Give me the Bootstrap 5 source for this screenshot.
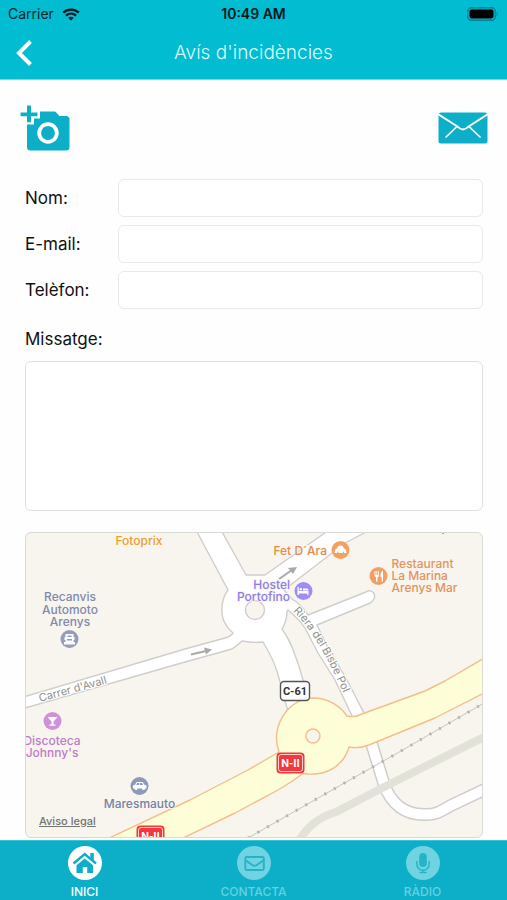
<!DOCTYPE html>
<html lang="ca">
<head>
<meta charset="utf-8">
<meta name="viewport" content="width=device-width, initial-scale=1">
<title>Avís d'incidències</title>
<link href="https://cdn.jsdelivr.net/npm/bootstrap@5.3.0/dist/css/bootstrap.min.css" rel="stylesheet">
<style>
  body { font-family: Inter, Roboto, "Liberation Sans", sans-serif; color: #111; background: #fefefe; }
  svg { display: block; }
  .top-area { background: #02bcd1; border-bottom: 1px solid #6fdbe6; height: 80px; }
  .status-line { height: 28px; padding: 0 8px; font-size: 14px; line-height: 28px; color: #04262b; }
  .status-time { font-weight: 600; color: #02181b; }
  .side { flex: 1 1 0; }
  .title-line { padding: 0 8px; height: 49px; }
  .title-line h1 { font-size: 19px; line-height: 28px; font-weight: 300; color: #dcfbff; }
  .plain-btn { display: block; background: none; border: 0; padding: 0; }
  .tools { padding: 25px 19px 0 20px; height: 99px; }
  .mail-btn { margin-top: 7px; }
  .report { padding: 0 24px 0 25px; }
  .report label { font-size: 17px; line-height: 24px; }
  .field-label { width: 93px; }
  .fields { gap: 8px; }
  .field { height: 38px; border: 1px solid #e9e9e9; border-radius: 6px; background: #fff; }
  .msg-label { margin: 18px 0 10px; }
  .msg { height: 150px; border: 1px solid #dedede; border-radius: 6px; resize: none; background: #fff; }
  .map-box { margin-top: 21px; border: 1px solid #d9d9d6; border-radius: 6px; background: #f8f5ee; }
  .map-box text { font-size: 12px; font-weight: 500; stroke: #f8f5ee; stroke-width: 2px; paint-order: stroke; }
  .map-box .street { fill: #8f8f8c; font-size: 11px; font-weight: 400; stroke: #fff; }
  .map-box .shield { stroke: none; font-family: Roboto, sans-serif; font-size: 11px; font-weight: 700; }
  .legal { left: 13px; bottom: 8px; font-size: 11px; line-height: 16px; font-weight: 500; color: #74736e; }
  .tabs { background: #0dafc8; height: 60px; border-top: 1px solid #3bc3d6; margin-top: 2px; }
  .tab { padding-top: 5px; gap: 4px; font-size: 12px; line-height: 16px; font-weight: 500; color: #66d1e0; }
  .tab.current { color: #fff; }
</style>
<script src="https://cdn.jsdelivr.net/npm/bootstrap@5.3.0/dist/js/bootstrap.bundle.min.js"></script>
</head>
<body class="d-flex flex-column min-vh-100">

<header class="top-area">
  <div class="status-line d-flex align-items-center">
    <div class="side d-flex align-items-center gap-2">
      <span>Carrier</span>
      <svg width="18" height="13" viewBox="0 0 18 13" fill="none" stroke="#02181b" stroke-width="2.4" aria-hidden="true">
        <path d="M1.2 4.7C5.6.6 12.4.6 16.8 4.7M4 7.6c2.9-2.6 7.1-2.6 10 0"/>
        <path d="M9 12.6 6.2 9.8c1.6-1.4 4-1.4 5.6 0z" fill="#02181b" stroke="none"/>
      </svg>
    </div>
    <div class="status-time">10:49 AM</div>
    <div class="side d-flex justify-content-end">
      <svg width="32" height="14" viewBox="0 0 32 14" aria-hidden="true">
        <rect x=".75" y=".75" width="27.5" height="12.5" rx="3.5" fill="none" stroke="#078290" stroke-width="1.3"/>
        <rect x="2.5" y="2.5" width="24" height="9" rx="2" fill="#000"/>
        <path d="M29.6 4.8c1.6.6 1.6 3.8 0 4.4z" fill="#078290"/>
      </svg>
    </div>
  </div>
  <div class="title-line d-flex align-items-center">
    <div class="side">
      <button type="button" class="plain-btn" aria-label="Enrere">
        <svg width="30" height="30" viewBox="0 0 30 30" fill="none" stroke="#fff" stroke-width="4"><path d="M22.500 3.500 11 15 22.500 26.500"/></svg>
      </button>
    </div>
    <h1 class="m-0">Avís d'incidències</h1>
    <div class="side"></div>
  </div>
</header>

<main class="flex-grow-1">
  <div class="tools d-flex justify-content-between align-items-start">
    <button type="button" class="plain-btn" aria-label="Afegir foto">
      <svg width="50" height="46" viewBox="0 0 50 46">
        <path d="M20 6.5h14.5q1 0 1.8 1l3 3.4H46q3.5 0 3.5 3.5V42q0 3.5-3.5 3.5H10.500q-3.500 0-3.500-3.500V19.500h7V13.500h6z" fill="#0dafc8"/>
        <path d="M7 .5h4v7h6.500v3.800H11v6H7v-6H.5V7.500H7z" fill="#0dafc8"/>
        <circle cx="28" cy="28" r="8.800" fill="none" stroke="#fff" stroke-width="3.800"/>
      </svg>
    </button>
    <button type="button" class="plain-btn mail-btn" aria-label="Enviar">
      <svg width="50" height="32" viewBox="0 0 50 32">
        <rect x=".5" y=".5" width="49" height="31" rx="2.500" fill="#0dafc8"/>
        <g fill="none" stroke="#fff"><path d="M0 2 19 14.200Q22 17.500 25 17.500T31 14.200L50 2" stroke-width="1.900"/><path d="M19.500 14 7.500 25.500M30.500 14 42.500 25.500" stroke-width="1.700"/></g>
      </svg>
    </button>
  </div>

  <form class="report">
    <div class="fields d-flex flex-column">
      <div class="d-flex align-items-center"><label class="field-label flex-shrink-0" for="nom">Nom:</label><input class="field form-control" id="nom" type="text"></div>
      <div class="d-flex align-items-center"><label class="field-label flex-shrink-0" for="email">E-mail:</label><input class="field form-control" id="email" type="email"></div>
      <div class="d-flex align-items-center"><label class="field-label flex-shrink-0" for="tel">Telèfon:</label><input class="field form-control" id="tel" type="tel"></div>
    </div>
    <label class="msg-label d-block" for="msg">Missatge:</label>
    <textarea class="msg form-control" id="msg"></textarea>

    <div class="map-box position-relative overflow-hidden">
      <svg class="w-100 h-auto" viewBox="26 533 456 304" role="img" aria-label="Mapa">
        <!-- lower street -->
        <g fill="none" stroke-linecap="round">
          <path d="M357 712 372 745 384 784C391 804 405 815 425 814.500 436 814.500 440 812 450 806L490 787" stroke="#cfcecb" stroke-width="13"/>
          <path d="M357 712 372 745 384 784C391 804 405 815 425 814.500 436 814.500 440 812 450 806L490 787" stroke="#fff" stroke-width="10"/>
        </g>
        <!-- rail lines -->
        <path d="M298 842C306 829 316 818 336 812L384 787 484 737" fill="none" stroke="#e3e2d8" stroke-width="8"/>
        <path d="M248 838 355 777 394 755 484 703" fill="none" stroke="#c5c4c1"/>
        <path d="M248 838 355 777 394 755 484 703" fill="none" stroke="#b4b3b1" stroke-width="3" stroke-dasharray="2 9"/>
        <!-- white streets -->
        <path d="M196 530 228 590C221 599 220 615 225 623Q228 629 233 633 230 637 225 638L185 649 20 698V709.500L185 662 232 649Q238 645 242 641 252 643 263 642 276 663 280 682L289 715H311C307 694 302 673 295 655Q290 640 282 629 287 621 287 611L288 610Q300 620 305 628L318 653 335 680 354 720 366 717 347 680 328 648 317 625 369 603.500C379 599 374 587 366 592L308 615Q301 604 292 599L284 590 345 543 370 530H329L265 575H246L221 530Z" fill="#fff" stroke="#cfcecb" stroke-width="1.400" stroke-linejoin="round"/>
        <circle cx="255" cy="610" r="9.500" fill="#f8f5ee" stroke="#cfcecb" stroke-width="1.400"/>
        <!-- national road -->
        <path d="M105 840 190 800 248 770 279 752C270 726 288 699 313 698 329 698 341 707 347 716Q354 718 362 714L425 691 445 681 486 657V692L435 718 369 745Q358 749 349 747C344 765 327 777 303 773.500Q292 782 278 790L235 813 179 840Z" fill="#fdfdd8" stroke="#f5bd87" stroke-width="1.400" stroke-linejoin="round"/>
        <circle cx="313" cy="736" r="7" fill="#f8f5ee" stroke="#f5bd87" stroke-width="1.400"/>
        <!-- direction arrows -->
        <g fill="#aaa9a8" stroke="#aaa9a8">
          <path d="M279 579 292 570" stroke-width="2"/><path d="M297 567 293 574 288 568z" stroke="none"/>
          <path d="M191 654.500 206 651" stroke-width="2"/><path d="M212 649.500 206 654.500 204 647.500z" stroke="none"/>
        </g>
        <!-- street names -->
        <defs><path id="riera" d="M293 611C313 631 329 660 345 697"/></defs>
        <text class="street" transform="translate(40 702) rotate(-15.500)">Carrer d'Avall</text>
        <text class="street"><textPath href="#riera">Riera del Bisbe Pol</textPath></text>
        <!-- road shields -->
        <rect x="280.500" y="681.500" width="29" height="19" rx="3.500" fill="#fff" stroke="#555" stroke-width="1.400"/>
        <text class="shield" x="295" y="695" text-anchor="middle" fill="#333">C-61</text>
        <g id="nii">
          <rect x="276.500" y="752.500" width="28" height="21" rx="4" fill="#f2383d"/>
          <rect x="278.500" y="754.500" width="24" height="17" rx="2.500" fill="none" stroke="#fbd0d0"/>
          <text class="shield" x="290.500" y="767" text-anchor="middle" fill="#fff">N-II</text>
        </g>
        <use href="#nii" x="-140" y="73"/>
        <!-- places -->
        <g text-anchor="middle">
          <text x="139" y="545" fill="#eba02f">Fotoprix</text>
          <g fill="#8189ae"><text x="70" y="601">Recanvis</text><text x="70" y="613.500">Automoto</text><text x="70" y="626">Arenys</text></g>
          <g fill="#bd7cc7"><text x="52" y="744.500">Discoteca</text><text x="52" y="757">Johnny's</text></g>
          <text x="139.500" y="808" fill="#7682a3">Maresmauto</text>
        </g>
        <g text-anchor="end">
          <text x="327" y="555" fill="#e48c50">Fet D´Ara</text>
          <g fill="#8c7ee8"><text x="290" y="589">Hostel</text><text x="290" y="601">Portofino</text></g>
        </g>
        <g fill="#e4935e"><text x="391.500" y="568">Restaurant</text><text x="391.500" y="580">La Marina</text><text x="391.500" y="592">Arenys Mar</text></g>
        <path d="M442 532h2v2h-2z" fill="#d79862"/>
        <!-- place markers -->
        <circle cx="69.500" cy="639" r="9" fill="#949dbd"/>
        <path d="M65.500 634h8v3h1v3h-1v2h1.500v2.500h-11V642h1.500v-2h-1v-3h1z" fill="#fff"/><path d="M67.500 635.500h4v1.500h-4zM67 639h5v1.500h-5z" fill="#949dbd"/>
        <circle cx="52.500" cy="721" r="9" fill="#cf92d8"/>
        <path d="M47.500 717h10l-4 4.500v3h2v1.200h-6v-1.200h2v-3z" fill="#fff"/>
        <circle cx="139.500" cy="786" r="9" fill="#8d9bb8"/>
        <path d="M133 785.500l2-.8 1.500-2.700h6l2 2.700 2 .8v3h-13.500z" fill="#fff"/><circle cx="136" cy="788.500" r="1.500" fill="#fff"/><circle cx="143.500" cy="788.500" r="1.500" fill="#fff"/><path d="M137.200 783h2v2h-3zM140 783h2l1.200 2H140z" fill="#8d9bb8"/>
        <circle cx="340.500" cy="550" r="9" fill="#f4a15f"/>
        <path d="M334.500 553c0-3 1-4.500 2.500-4.500.5-2 1.500-3 3.500-3s3 1 3.500 3c1.500 0 2.500 1.500 2.500 4.500h-2.500l-.5-2-1 2h-4l-1-2-.5 2z" fill="#fff"/>
        <circle cx="303.500" cy="591" r="9" fill="#9e8df5"/>
        <path d="M297.500 587h1.300v4h9.700v4h-1.300v-1.500h-8.400v1.500h-1.300zM303 588.500h4q1.500 0 1.500 2H303z" fill="#fff"/><circle cx="300.800" cy="589.300" r="1.200" fill="#fff"/>
        <circle cx="378.500" cy="576" r="9" fill="#f0a066"/>
        <path d="M374.500 571v4.500q0 1.500 1.500 1.500v4.500h1.500V577q1.500 0 1.500-1.500V571h-.8v4h-.9v-4h-.9v4h-.9v-4zM383 570.500c-2 1-2.500 3-2.500 6.500h1.200v4.500h1.300z" fill="#fff"/>
      </svg>
      <a class="legal position-absolute" href="#legal">Aviso legal</a>
    </div>
  </form>
</main>

<nav class="tabs d-flex" aria-label="Seccions">
  <a class="tab current col-4 d-flex flex-column align-items-center text-decoration-none" href="#inici" aria-current="page">
    <svg width="34" height="34" viewBox="0 0 34 34"><circle cx="17" cy="17" r="17" fill="#fff"/>
      <path d="M5.500 17.500 16.700 8 28 17.500" fill="none" stroke="#0dafc8" stroke-width="2.400"/><path d="M22.300 7h3.500v8l-3.500-3z" fill="#0dafc8"/>
      <path d="M8.500 19.300 16.700 12.500l8.300 6.800V27h-5.800v-6h-4.400v6H8.500z" fill="#0dafc8"/></svg>
    <span>INICI</span>
  </a>
  <a class="tab col-4 d-flex flex-column align-items-center text-decoration-none" href="#contacta">
    <svg width="34" height="34" viewBox="0 0 34 34"><circle cx="17" cy="17" r="17" fill="#6fd3e1"/>
      <g fill="none" stroke="#25b3c8" stroke-width="1.900"><rect x="8.300" y="11" width="18.500" height="13" rx="1.500"/><path d="M8.500 14.200 15.200 19q2.300 1.600 4.600 0l6.800-4.800"/></g></svg>
    <span>CONTACTA</span>
  </a>
  <a class="tab col-4 d-flex flex-column align-items-center text-decoration-none" href="#radio">
    <svg width="34" height="34" viewBox="0 0 34 34"><circle cx="17" cy="17" r="17" fill="#6fd3e1"/>
      <rect x="13.200" y="7" width="7.600" height="14" rx="3.800" fill="#25b3c8"/><path d="M10.800 15v3a6.200 6.200 0 0 0 12.400 0v-3M17 24v2.500M13.500 26.500h7" fill="none" stroke="#25b3c8" stroke-width="1.400"/></svg>
    <span>RÀDIO</span>
  </a>
</nav>
</body>
</html>
